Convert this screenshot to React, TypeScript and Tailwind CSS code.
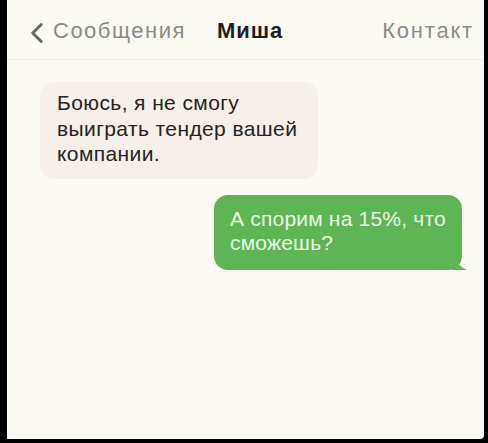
import { ChevronLeft } from 'lucide-react'

export default function App() {
  return (
    <div className="w-[488px] h-[443px] bg-black pl-[7px] pr-[4px] pb-[4px] overflow-hidden font-['Liberation_Sans',Arial,sans-serif]">
      <div className="h-full bg-[#fcfbf3] rounded-br-[4px] flex flex-col">
        {/* шапка */}
        <div className="h-[60px] flex items-center border-b border-[#f0eee4] pl-[13px] pr-[10px] pt-[1px]">
          <ChevronLeft className="w-[34px] h-[34px] text-[#666666] mt-[6px]" strokeWidth={2.1} />
          <span className="text-[22px] text-[#8a8a8a] -ml-[1px] tracking-[1.5px]">Сообщения</span>
          <span className="text-[22px] font-bold text-[#1e1e1e] ml-[31px] tracking-[1px]">Миша</span>
          <span className="text-[22px] text-[#8a8a8a] ml-auto tracking-[1.8px]">Контакт</span>
        </div>

        {/* переписка */}
        <div className="flex flex-col pt-[22px] px-[6px]">
          <div className="self-start ml-[27px] w-[278px] rounded-[14px] bg-[#f7f0ea] pl-[17px] pr-[4px] pt-[8px] pb-[12px] text-[21px] leading-[25.5px] tracking-[0.4px] text-[#232323]">
            Боюсь, я не смогу
            <br />
            выиграть тендер вашей
            <br />
            компании.
          </div>

          <div className="relative self-end mr-[16px] mt-[16px] w-[248px] rounded-[14px] bg-[#5db653] pl-[16px] pr-[4px] pt-[12px] pb-[15px] text-[21px] leading-[24px] tracking-[0.2px] text-[#eef6e6]">
            А спорим на 15%, что
            <br />
            сможешь?
            <svg className="absolute -right-[6px] bottom-0" width="16" height="14" viewBox="0 0 16 14">
              <path d="M0 0 C4 6 8 11 15 14 L0 14 Z" fill="#5db653" />
            </svg>
          </div>
        </div>
      </div>
    </div>
  )
}
